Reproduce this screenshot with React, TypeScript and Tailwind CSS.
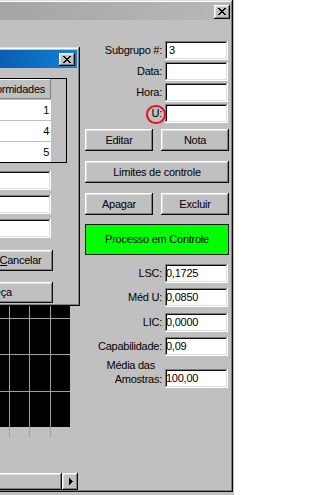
import React from 'react';

// Win98-style bevels
const RAISED =
  'shadow-[inset_-1px_-1px_#0a0a0a,inset_1px_1px_#ffffff,inset_-2px_-2px_#808080,inset_2px_2px_#dfdfdf]';
const SUNKEN =
  'shadow-[inset_-1px_-1px_#ffffff,inset_1px_1px_#808080,inset_-2px_-2px_#dfdfdf,inset_2px_2px_#0a0a0a]';

const X_ROWS = [
  '11000011',
  '01100110',
  '00111100',
  '00011000',
  '00111100',
  '01100110',
  '11000011',
];

const CloseGlyph: React.FC = () => (
  <svg width="8" height="7" viewBox="0 0 8 7" shapeRendering="crispEdges" className="block">
    {X_ROWS.flatMap((row, y) =>
      row.split('').map((c, x) =>
        c === '1' ? <rect key={`${x}-${y}`} x={x} y={y} width="1" height="1" fill="#000" /> : null
      )
    )}
  </svg>
);

const CaptionButton: React.FC<{ className?: string }> = ({ className = '' }) => (
  <div className={`flex w-[16px] shrink-0 items-start bg-[#c0c0c0] pl-[4px] pt-[3px] ${RAISED} ${className}`}>
    <CloseGlyph />
  </div>
);

const ArrowRight: React.FC = () => (
  <svg width="4" height="7" viewBox="0 0 4 7" shapeRendering="crispEdges" className="block">
    <rect x="0" y="0" width="1" height="7" fill="#000" />
    <rect x="1" y="1" width="1" height="5" fill="#000" />
    <rect x="2" y="2" width="1" height="3" fill="#000" />
    <rect x="3" y="3" width="1" height="1" fill="#000" />
  </svg>
);

const Button: React.FC<{ className?: string; children: React.ReactNode }> = ({
  className = '',
  children,
}) => (
  <div className={`flex h-[22px] items-center justify-center bg-[#c0c0c0] ${RAISED} ${className}`}>
    {children}
  </div>
);

/**
 * Label + sunken edit box, label right-aligned against the box
 */
const Field: React.FC<{
  label: string;
  value?: string;
  className?: string;
  pad?: string;
  circled?: boolean;
}> = ({ label, value = '', className = '', pad = 'pl-[2px]', circled }) => (
  <div className={`relative flex h-[19px] items-center ${className}`}>
    <span className="flex-1 text-right">{label}</span>
    <div className={`ml-[3px] mr-[1px] flex h-[19px] w-[63px] items-center bg-white ${pad} ${SUNKEN}`}>
      {value}
    </div>
    {circled && (
      <span className="absolute left-[61px] top-[1px] h-[19px] w-[20px] rounded-full border-2 border-[#e3141b]" />
    )}
  </div>
);

const LeftColumn: React.FC = () => (
  <div className="flex w-[85px] shrink-0 flex-col">
    <svg width="71" height="131" shapeRendering="crispEdges" className="mt-[286px] block">
      <rect x="0" y="0" width="70" height="121" fill="#000" />
      {[9, 29, 50].map((x) => (
        <rect key={x} x={x} y="0" width="1" height="131" fill="#a0a0a0" />
      ))}
      {[12, 48, 85].map((y) => (
        <rect key={y} x="0" y={y} width="70" height="1" fill="#a0a0a0" />
      ))}
    </svg>
    <div className="mt-[36px] flex h-[17px] w-[78px]">
      <div className={`ml-[-10px] h-full w-[72px] bg-[#c0c0c0] ${RAISED}`} />
      <div className={`flex h-full w-[16px] items-center justify-center bg-[#c0c0c0] pl-[1px] ${RAISED}`}>
        <ArrowRight />
      </div>
    </div>
  </div>
);

const RightColumn: React.FC = () => (
  <div className="flex w-[144px] shrink-0 flex-col pt-[21px]">
    <div className="flex flex-col gap-[2px]">
      <Field label="Subgrupo #:" value="3" pad="pl-[4px]" />
      <Field label="Data:" />
      <Field label="Hora:" />
      <Field label="U:" circled />
    </div>

    <div className="mt-[6px] flex gap-[8px]">
      <Button className="w-[68px]">Editar</Button>
      <Button className="w-[68px]">Nota</Button>
    </div>
    <Button className="mt-[10px] w-[144px]">Limites de controle</Button>
    <div className="mt-[10px] flex gap-[8px]">
      <Button className="w-[68px]">Apagar</Button>
      <Button className="w-[68px]">Excluir</Button>
    </div>

    <div className="mt-[9px] flex h-[31px] items-center justify-center border border-[#1a1a1a] bg-[#00ff00]">
      Processo em Controle
    </div>

    <Field className="mt-[9px]" label="LSC:" value="0,1725" pad="pl-[1px]" />
    <Field className="mt-[5px]" label="Méd U:" value="0,0850" pad="pl-[1px]" />
    <Field className="mt-[6px]" label="LIC:" value="0,0000" pad="pl-[1px]" />
    <Field className="mt-[5px]" label="Capabilidade:" value="0,09" pad="pl-[1px]" />

    <div className="mt-[2px] flex items-end">
      <div className="flex-1 pb-[2px] text-right leading-[14px]">
        <div className="pr-[7px]">Média das</div>
        <div>Amostras:</div>
      </div>
      <div className={`ml-[3px] mr-[1px] flex h-[19px] w-[63px] items-center bg-white pl-[1px] ${SUNKEN}`}>
        100,00
      </div>
    </div>
  </div>
);

/**
 * Overlapping dialog, mostly off the left edge of the shot
 */
const Dialog: React.FC = () => (
  <div className="absolute left-[-122px] top-[47px] flex h-[259px] w-[202px] flex-col bg-[#c0c0c0] p-[3px] shadow-[inset_-1px_-1px_#0a0a0a,inset_1px_1px_#dfdfdf,inset_-2px_-2px_#808080,inset_2px_2px_#ffffff]">
    <div className="flex h-[18px] shrink-0 items-start justify-end bg-linear-to-r from-[#0a246a] via-[#0b5cb4] via-60% to-[#1084d0] pr-[2px] pt-[3px]">
      <CaptionButton className="h-[13px]" />
    </div>

    <div className="mt-[10px] flex justify-end pr-[10px]">
      <div className="flex h-[85px] w-[150px] border border-black bg-[#c0c0c0]">
        <div className="flex flex-1 flex-col gap-px">
          <div className="flex h-[20px] items-center justify-end pr-[6px] shadow-[inset_-1px_-1px_#808080,inset_1px_1px_#ffffff]">
            Não conformidades
          </div>
          {['1', '4', '5'].map((n) => (
            <div key={n} className="flex h-[20px] items-center justify-end bg-white pr-[2px]">
              {n}
            </div>
          ))}
        </div>
        <div className="w-[15px]" />
      </div>
    </div>

    <div className="mt-[8px] flex flex-col items-end gap-[5px] pr-[26px]">
      <div className={`h-[19px] w-[120px] bg-white ${SUNKEN}`} />
      <div className={`h-[19px] w-[120px] bg-white ${SUNKEN}`} />
      <div className={`h-[19px] w-[120px] bg-white ${SUNKEN}`} />
    </div>

    <div className="mt-[12px] flex justify-end pr-[24px]">
      <div className={`flex h-[21px] w-[65px] items-center justify-center bg-[#c0c0c0] ${RAISED}`}>
        <span>
          <span className="underline">C</span>ancelar
        </span>
      </div>
    </div>
    <div className="mt-[11px] flex justify-end pr-[24px]">
      <div className={`flex h-[21px] w-[134px] items-center justify-center bg-[#c0c0c0] ${RAISED}`}>
        Nova Peça
      </div>
    </div>
  </div>
);

export default function App() {
  return (
    <div className="relative h-[495px] w-[234px] overflow-hidden bg-[#c0c0c0] font-['Liberation_Sans',Arial,sans-serif] text-[11px] tracking-[-0.25px] text-black">
      <div className="flex h-[492px] w-[233px] flex-col pb-[2px] pr-[2px] pt-[2px] shadow-[inset_-1px_-1px_#0a0a0a,inset_0_1px_#dfdfdf,inset_-2px_-2px_#808080,inset_0_2px_#ffffff]">
        <div className="flex h-[18px] shrink-0 items-start justify-end bg-linear-to-r from-[#a5a5a5] to-[#b8b8b8] pr-[1px] pt-[3px]">
          <CaptionButton className="h-[14px]" />
        </div>
        <div className="flex flex-1">
          <LeftColumn />
          <RightColumn />
        </div>
      </div>
      <Dialog />
    </div>
  );
}
